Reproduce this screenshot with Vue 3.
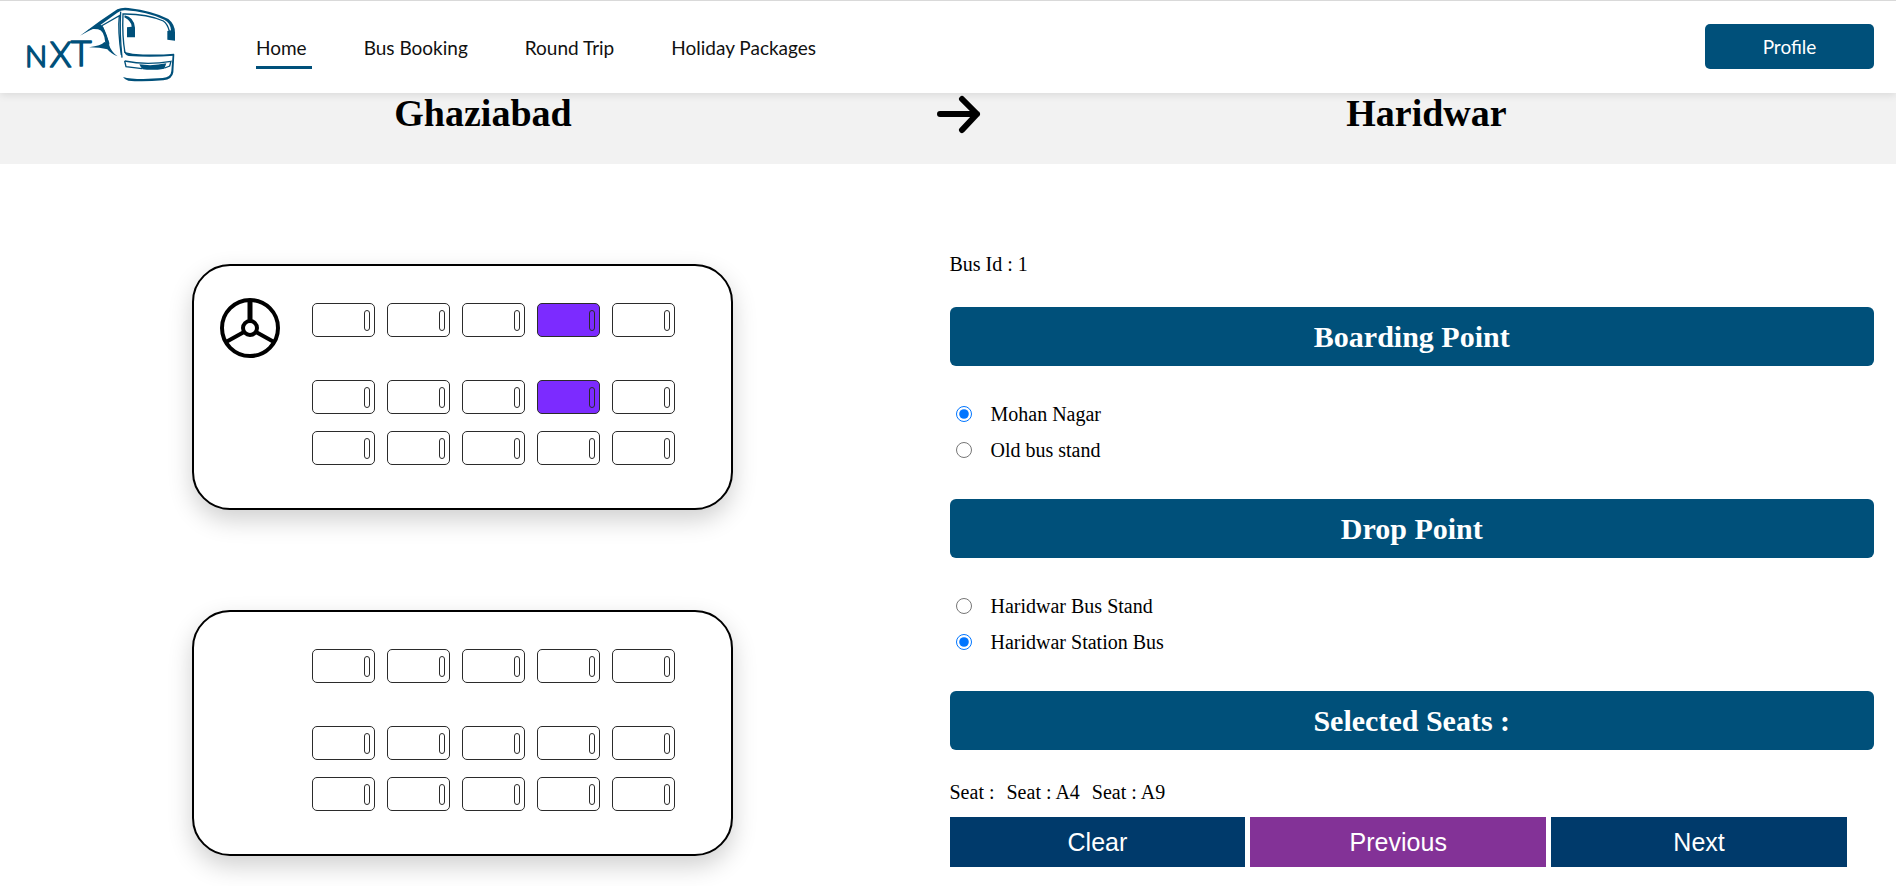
<script setup>
import { ref, computed } from 'vue'

const navItems = ['Home', 'Bus Booking', 'Round Trip', 'Holiday Packages']
const active = ref('Home')

const route = { from: 'Ghaziabad', to: 'Haridwar' }

const makeDeck = (prefix) => [0, 5, 10].map((start) =>
  [1, 2, 3, 4, 5].map((n) => `${prefix}${start + n}`)
)
const decks = [
  { id: 'lower', label: 'Lower deck', driver: true, rows: makeDeck('A') },
  { id: 'upper', label: 'Upper deck', driver: false, rows: makeDeck('B') }
]

const selected = ref(['A4', 'A9'])
const toggle = (seat) => {
  selected.value = selected.value.includes(seat)
    ? selected.value.filter((s) => s !== seat)
    : [...selected.value, seat]
}
const seatLabels = computed(() => ['Seat :', ...selected.value.map((s) => `Seat : ${s}`)])

const boarding = ref('Mohan Nagar')
const drop = ref('Haridwar Station Bus')
const boardingPoints = ['Mohan Nagar', 'Old bus stand']
const dropPoints = ['Haridwar Bus Stand', 'Haridwar Station Bus']
</script>

<template>
  <div class="page">
    <header class="header">
      <a href="#" class="logo" aria-label="NXT bus">
        <svg viewBox="60 0 480 270" width="160" height="90" aria-hidden="true">
          <g class="logo-text">
            <text x="75" y="199" font-size="88">N</text>
            <text x="149" y="199" font-size="104">X</text>
            <text x="212" y="196" font-size="108">T</text>
          </g>
          <g class="logo-fill">
            <path d="M240 104 L300 60 L352 25 Q365 19 385 21 Q460 30 505 54 Q525 70 525 95 L525 119 L502 116 L502 90 L513 88 Q512 66 493 56 Q440 32 376 28 Q364 27 352 35 L298 74 Q268 88 240 104 Z" />
            <path d="M262 88 L299 70 L308 76 Q322 100 328 132 L316 126 Q313 88 294 85 Q275 82 262 88 Z" />
            <path d="M267 139 Q304 134 313 123 L326 128 Q333 152 353 166 Q333 159 322 145 Q300 139 267 139 Z" />
            <path d="M381 79 L395 77 Q394 60 373 49 L374 43 Q402 49 405 80 L405 109 L381 109 Z" />
            <path d="M418 190 Q458 196 499 187 L493 203 Q460 209 428 205 Q422 199 418 190 Z" />
            <path d="M369 228 Q390 234 430 234 L488 231 Q513 229 514 210 L518 160 L523 160 L520 214 Q517 236 490 238 Q425 243 385 239 Q374 236 369 228 Z" />
            <path d="M371 148 Q376 156 398 158 Q460 163 522 158 L522 164 Q455 170 386 165 Q373 162 371 148 Z" />
          </g>
          <g class="logo-line">
            <path d="M304 75 L358 44 Q353 90 364 162" />
            <path d="M307 77 Q317 105 327 128" />
            <path d="M375 156 Q366 105 369 39 Q440 38 490 60 Q502 68 508 90" />
            <path d="M362 32 Q358 95 366 170" />
            <path d="M374 180 Q440 194 513 181 L509 195 L494 201" />
            <path d="M374 180 L378 197 L426 203" />
          </g>
        </svg>
      </a>
      <nav class="nav">
        <a
          v-for="item in navItems"
          :key="item"
          href="#"
          class="nav-link"
          :class="{ active: item === active }"
          @click.prevent="active = item"
        >{{ item }}</a>
      </nav>
      <button type="button" class="profile">Profile</button>
    </header>

    <section class="route">
      <h1>{{ route.from }}</h1>
      <svg class="arrow" viewBox="0 0 44 42" width="44" height="42" role="img" aria-label="to">
        <path d="M3 21 H40 M25 6 L40 21 L25 37" />
      </svg>
      <h1>{{ route.to }}</h1>
    </section>

    <main class="content">
      <div class="decks">
        <section v-for="deck in decks" :key="deck.id" class="deck" :aria-label="deck.label">
          <div class="cab">
            <svg v-if="deck.driver" viewBox="0 0 60 60" width="60" height="60" aria-hidden="true">
              <circle cx="30" cy="30" r="28" />
              <circle cx="30" cy="30" r="7" />
              <path d="M30 2 V23" class="spoke" />
              <path d="M24 34 L6 44 M36 34 L54 44" />
            </svg>
          </div>
          <div class="rows">
            <div v-for="(row, i) in deck.rows" :key="i" class="row">
              <button
                v-for="seat in row"
                :key="seat"
                type="button"
                class="seat"
                :class="{ chosen: selected.includes(seat) }"
                :aria-label="`Seat ${seat}`"
                :aria-pressed="selected.includes(seat)"
                @click="toggle(seat)"
              ><span class="headrest"></span></button>
            </div>
          </div>
        </section>
      </div>

      <form class="details" @submit.prevent>
        <p class="line">Bus Id : 1</p>

        <h2 id="boarding-title" class="bar">Boarding Point</h2>
        <div role="radiogroup" aria-labelledby="boarding-title">
          <label v-for="p in boardingPoints" :key="p" class="option">
            <input v-model="boarding" type="radio" name="boarding" :value="p" />
            <span>{{ p }}</span>
          </label>
        </div>

        <h2 id="drop-title" class="bar">Drop Point</h2>
        <div role="radiogroup" aria-labelledby="drop-title">
          <label v-for="p in dropPoints" :key="p" class="option">
            <input v-model="drop" type="radio" name="drop" :value="p" />
            <span>{{ p }}</span>
          </label>
        </div>

        <h2 class="bar">Selected Seats :</h2>
        <p class="line seats">
          <span v-for="s in seatLabels" :key="s">{{ s }}</span>
        </p>

        <div class="actions">
          <button type="button" @click="selected = []">Clear</button>
          <button type="button" class="previous">Previous</button>
          <button type="button">Next</button>
        </div>
      </form>
    </main>
  </div>
</template>

<style>
body {
  margin: 0;
  background: #fff;
}
</style>

<style scoped>
.page {
  font-family: "Liberation Serif", "Times New Roman", serif;
  color: #000;
}

.header {
  position: relative;
  z-index: 1;
  box-sizing: border-box;
  height: 93px;
  display: flex;
  align-items: center;
  padding: 0 22px 2px 20px;
  border-top: 1px solid #d9d9d9;
  background: #fff;
  box-shadow: 0 2px 8px rgba(0, 0, 0, 0.1);
  font-family: Lato, "Open Sans", sans-serif;
  font-size: 19px;
}

.logo,
.logo svg {
  display: block;
}

.logo-text {
  fill: #00507a;
  stroke: #00507a;
  stroke-width: 5;
  stroke-linejoin: round;
  font-family: Lato, sans-serif;
  font-weight: 300;
}

.logo-fill {
  fill: #00507a;
}

.logo-line {
  fill: none;
  stroke: #00507a;
  stroke-width: 4;
}

.nav {
  flex: 1;
  display: flex;
  gap: 52px;
  margin-left: 76px;
}

.nav-link {
  padding: 12px 5px 6px 0;
  border-bottom: 3px solid transparent;
  line-height: 24px;
  color: #111;
  text-decoration: none;
}

.nav-link.active {
  border-bottom-color: #00507a;
}

.profile {
  width: 169px;
  height: 45px;
  padding: 0;
  border: 0;
  border-radius: 5px;
  background: #00507a;
  color: #fff;
  font: inherit;
  cursor: pointer;
}

.route {
  display: flex;
  justify-content: space-evenly;
  padding: 0 24px 29px 29px;
  background: #f2f2f2;
}

.route h1 {
  margin: 0;
  font-size: 38px;
  line-height: 40px;
}

.arrow {
  fill: none;
  stroke: #000;
  stroke-width: 6;
  stroke-linecap: round;
  stroke-linejoin: round;
}

.content {
  display: grid;
  grid-template-columns: 1fr 1fr;
  gap: 25px;
  padding-right: 22px;
}

.decks {
  display: flex;
  flex-direction: column;
  align-items: center;
  gap: 100px;
  padding: 100px 0 30px;
}

.deck {
  display: flex;
  padding: 32px 56px 43px 26px;
  border: 2px solid #000;
  border-radius: 38px;
  background: #fff;
  box-shadow: 0 10px 24px rgba(0, 0, 0, 0.19);
}

.cab {
  width: 60px;
  margin-right: 32px;
}

.cab svg {
  display: block;
  fill: none;
  stroke: #000;
  stroke-width: 4;
}

.cab .spoke {
  stroke-width: 5;
}

.rows {
  display: flex;
  flex-direction: column;
  gap: 17px;
  padding-top: 5px;
}

.row {
  display: flex;
  gap: 12px;
}

/* aisle between the single and the double row */
.row:first-child {
  margin-bottom: 26px;
}

.seat {
  display: flex;
  align-items: center;
  justify-content: flex-end;
  box-sizing: border-box;
  width: 63px;
  height: 34px;
  padding: 0 4px 0 0;
  border: 1px solid #2b2b2b;
  border-radius: 5px;
  background: #fff;
  cursor: pointer;
}

.seat.chosen {
  background: #7c2bff;
}

.headrest {
  box-sizing: border-box;
  width: 6px;
  height: 21px;
  border: 1px solid #2b2b2b;
  border-radius: 3px;
}

.details {
  padding-top: 88px;
  font-size: 20px;
}

.line {
  margin: 0;
  line-height: 24px;
}

.bar {
  margin: 31px 0 30px;
  padding: 12px 0;
  border-radius: 6px;
  background: #00507a;
  color: #fff;
  font-size: 30px;
  line-height: 35px;
  text-align: center;
}

.option {
  display: flex;
  align-items: center;
  height: 36px;
}

.option input {
  width: 16px;
  height: 16px;
  margin: 0 19px 0 6px;
}

.seats {
  display: flex;
  gap: 12px;
  margin-bottom: 13px;
}

.actions {
  display: flex;
  gap: 5px;
}

.actions button {
  width: 32%;
  height: 50px;
  padding: 0;
  border: 0;
  background: #003a6b;
  color: #fff;
  font-family: "Liberation Sans", Arial, sans-serif;
  font-size: 25px;
  cursor: pointer;
}

.actions .previous {
  background: #833297;
}
</style>
